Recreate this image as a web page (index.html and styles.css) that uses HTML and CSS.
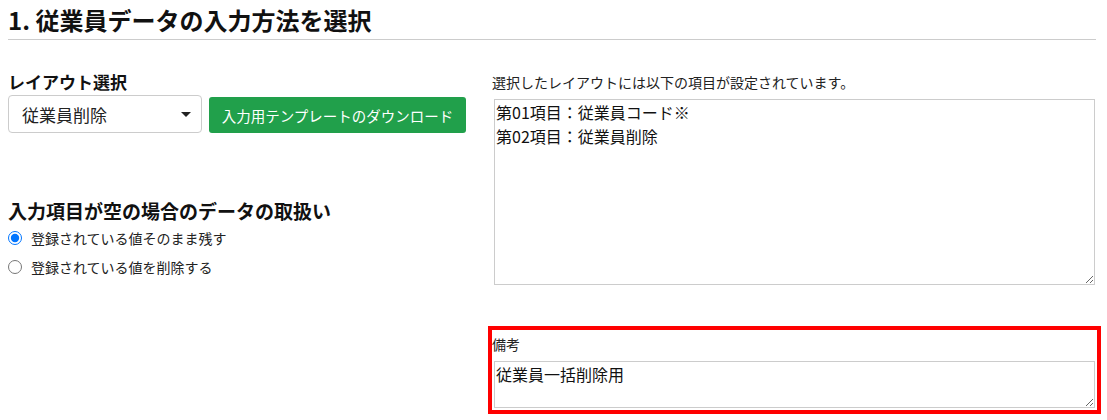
FILE: index.html
```html
<!DOCTYPE html>
<html lang="ja">
<head>
<meta charset="utf-8">
<title>従業員データの入力方法を選択</title>
<link rel="stylesheet" href="styles.css">
</head>
<body>
<div class="page">
  <h1 class="section-title">1. 従業員データの入力方法を選択</h1>
  <div class="columns">
    <div class="left">
      <div class="field-label">レイアウト選択</div>
      <div class="layout-row">
        <div class="select-wrap">
          <select class="select">
            <option>従業員削除</option>
          </select>
        </div>
        <button class="btn-download" type="button">入力用テンプレートのダウンロード</button>
      </div>
      <div class="field-label empty-title">入力項目が空の場合のデータの取扱い</div>
      <label class="radio-row"><input type="radio" name="empty" checked><span>登録されている値そのまま残す</span></label>
      <label class="radio-row"><input type="radio" name="empty"><span>登録されている値を削除する</span></label>
    </div>
    <div class="right">
      <div class="info-label">選択したレイアウトには以下の項目が設定されています。</div>
      <textarea class="items-area">第01項目：従業員コード※
第02項目：従業員削除</textarea>
      <div class="note-box">
        <div class="note-label">備考</div>
        <textarea class="note-area">従業員一括削除用</textarea>
      </div>
    </div>
  </div>
</div>
</body>
</html>
```
FILE: styles.css
```css
* { box-sizing: border-box; }
body {
  margin: 0;
  background: #fff;
  color: #212529;
  font-family: "Noto Sans CJK JP", "Noto Sans", sans-serif;
}
.page {
  padding-left: 8px;
  width: 1097px;
}
.section-title {
  margin: 5px 0 0;
  width: 1088px;
  font-size: 24px;
  line-height: 30px;
  font-weight: bold;
  color: #111;
  padding-bottom: 4px;
  border-bottom: 1px solid #ccc;
}
.columns {
  display: grid;
  grid-template-columns: 484px 605px;
  padding-top: 30px;
}
.field-label {
  font-size: 17px;
  font-weight: bold;
  line-height: 24px;
  color: #111;
}
.layout-row {
  display: flex;
  align-items: flex-end;
  gap: 7px;
  margin-top: 1px;
}
.select-wrap {
  position: relative;
  width: 194px;
  height: 38px;
}
.select-wrap::after {
  content: "";
  position: absolute;
  left: 173px;
  top: 17px;
  border-left: 5px solid transparent;
  border-right: 5px solid transparent;
  border-top: 5px solid #222;
  pointer-events: none;
}
.select {
  appearance: none;
  -webkit-appearance: none;
  width: 100%;
  height: 100%;
  border: 1px solid #ccc;
  border-radius: 4px;
  background: #fff;
  padding: 0 0 0 13px;
  font-family: inherit;
  font-size: 17px;
  color: #222;
}
.btn-download {
  width: 257px;
  height: 36px;
  border: none;
  border-radius: 3px;
  background: #21a04b;
  color: #fff;
  font-family: inherit;
  font-size: 14.5px;
  padding: 0;
}
.empty-title {
  font-size: 19px;
  margin-top: 66px;
}
.radio-row {
  display: flex;
  align-items: center;
  gap: 9px;
  height: 29px;
  font-size: 14px;
  color: #222;
}
.radio-row input {
  margin: 0;
  width: 14px;
  height: 14px;
}
.info-label {
  font-size: 14px;
  line-height: 24px;
  color: #222;
}
.items-area, .note-area {
  display: block;
  margin: 0 2px;
  width: 601px;
  border: 1px solid #ccc;
  padding: 0 1px;
  font-family: inherit;
  font-size: 16px;
  line-height: 24px;
  color: #111;
  background: #fff;
}
.items-area {
  margin-top: 5px;
  height: 186px;
}
.note-box {
  margin: 41px -4px 0;
  border: 4px solid #ff0000;
  padding: 4px 0 2px;
}
.note-label {
  font-size: 14px;
  line-height: 20px;
  color: #222;
}
.note-area {
  margin-top: 7px;
  height: 47px;
}
```
